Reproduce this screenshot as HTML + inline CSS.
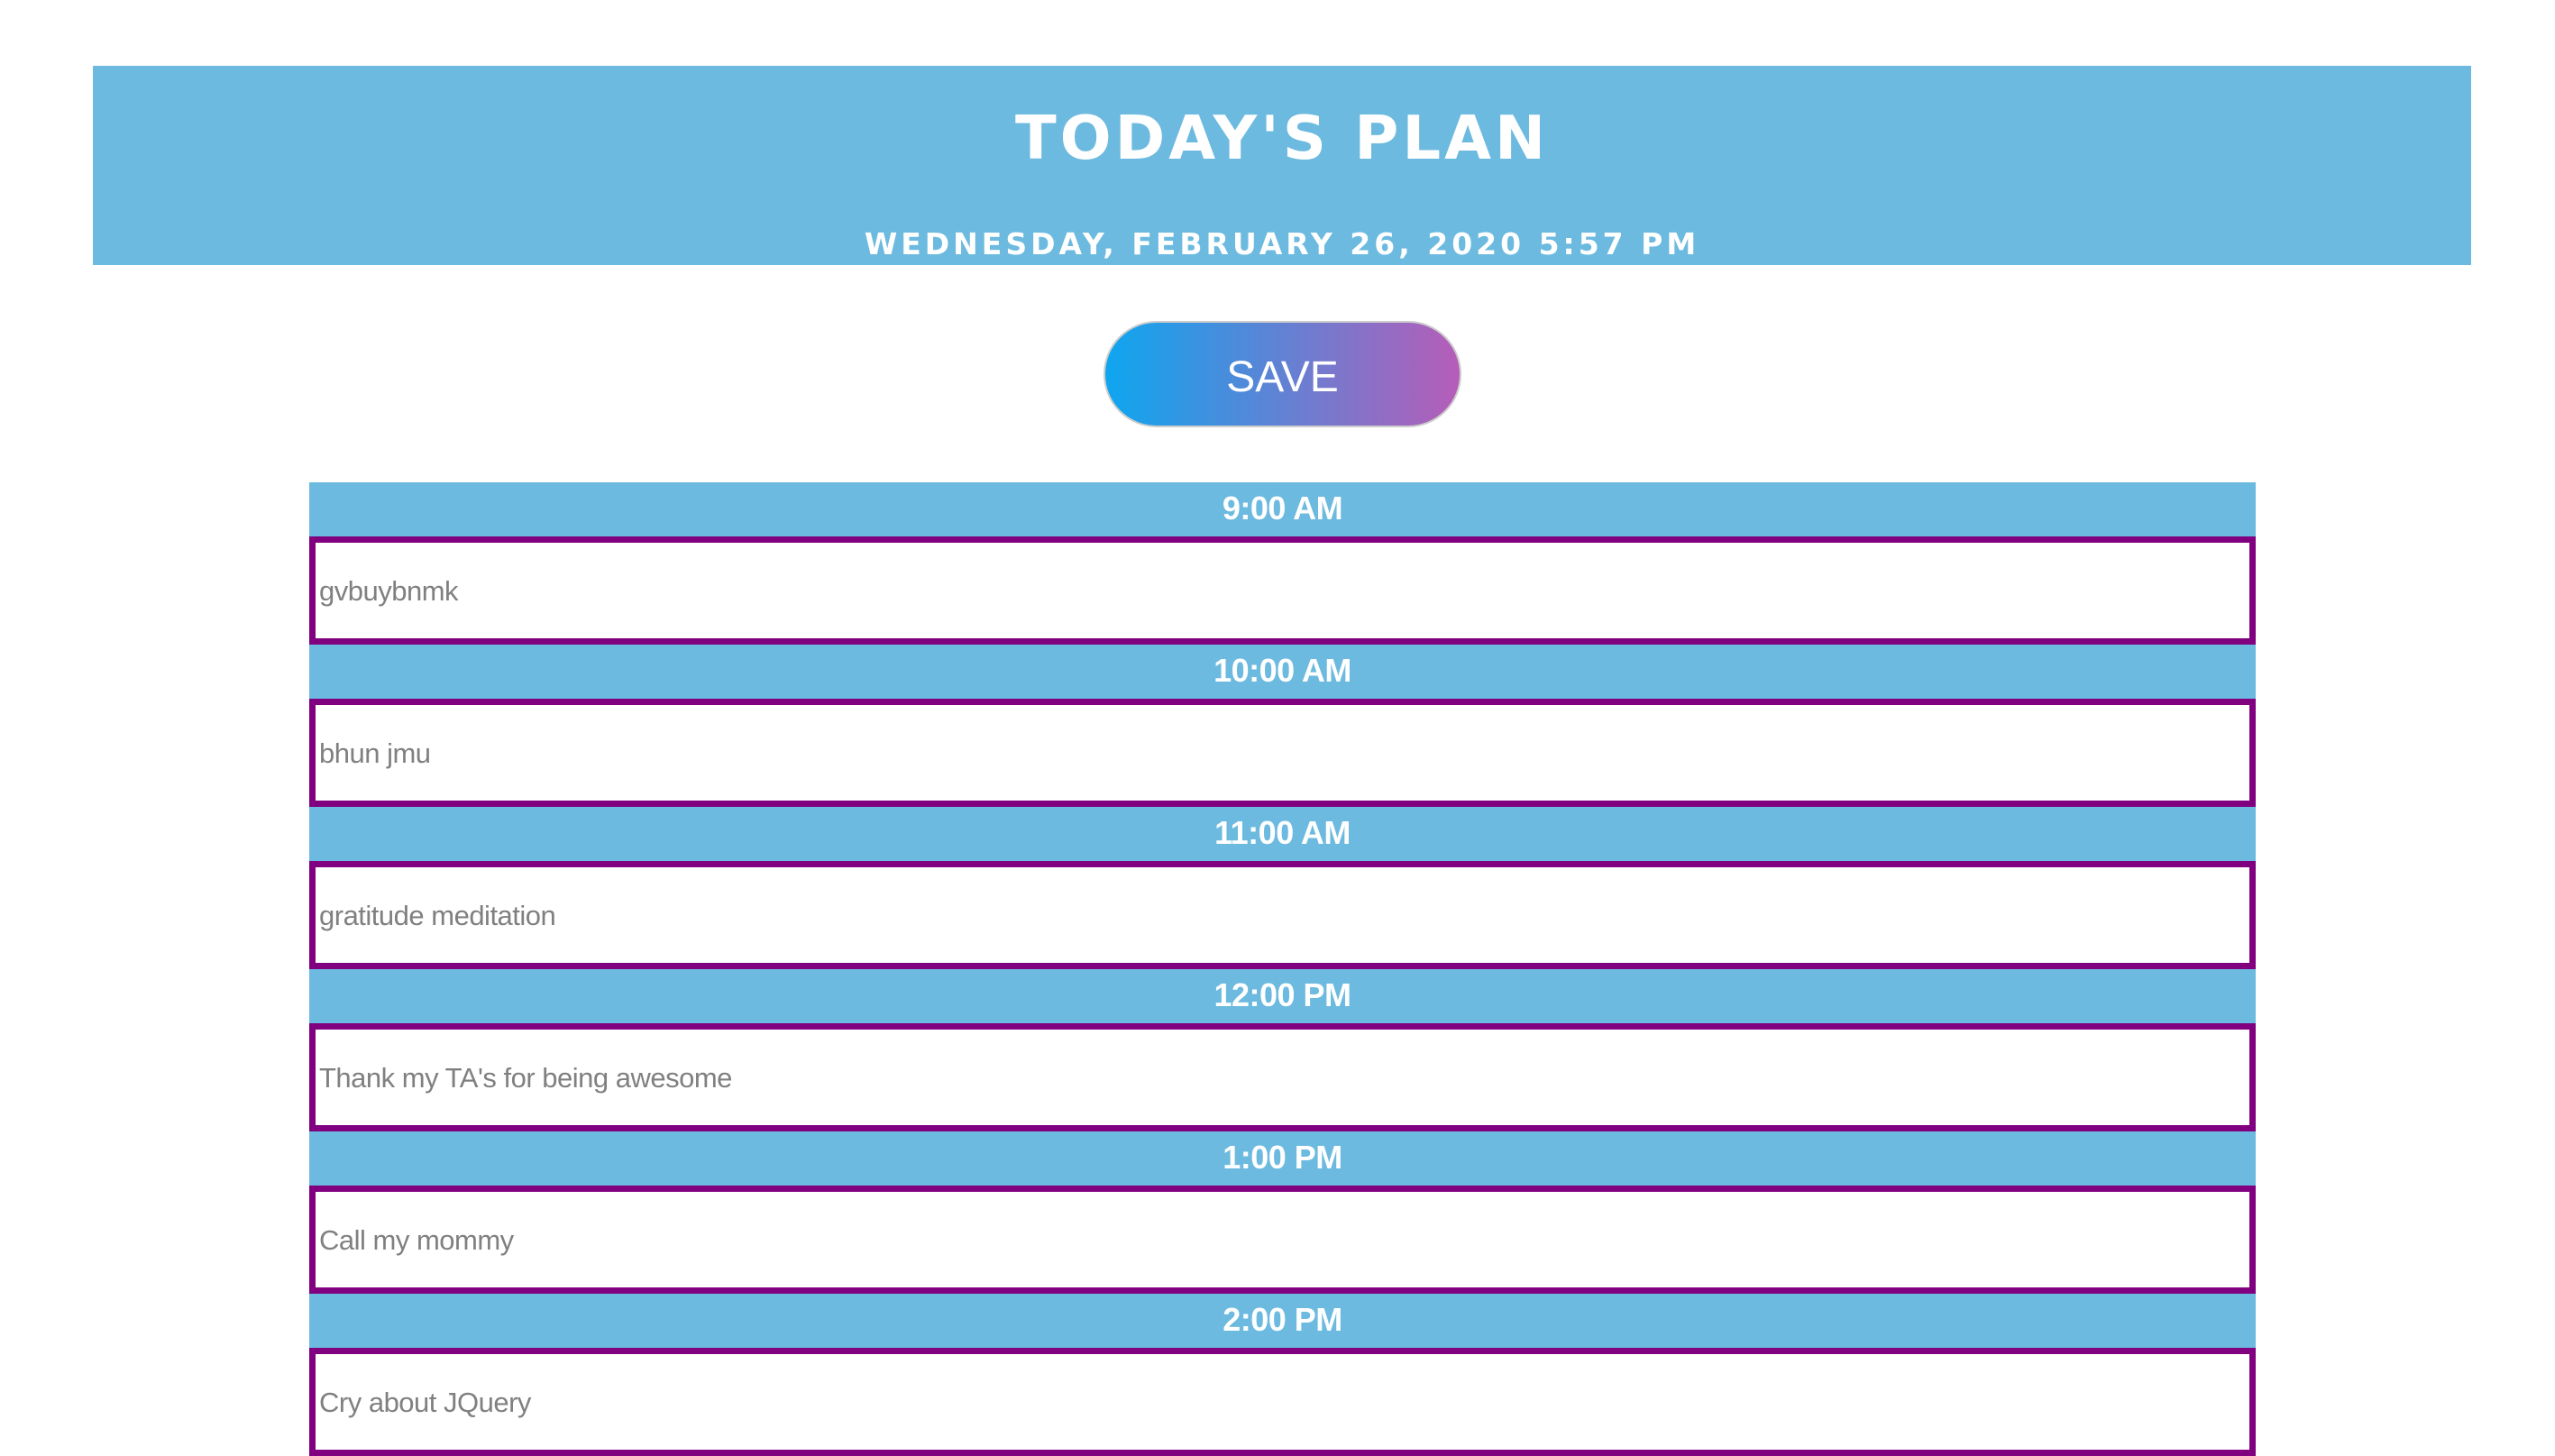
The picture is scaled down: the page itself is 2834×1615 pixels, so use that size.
<!DOCTYPE html>
<html><head><meta charset="utf-8"><style>
html,body{margin:0;padding:0;background:#fff;width:2834px;height:1614px;overflow:hidden}
.hdr{position:absolute;left:103px;top:73px;width:2638px;height:221px;background:#6cbadf;color:#fff;text-align:center;font-family:"DejaVu Sans",sans-serif;font-weight:bold}
.t{position:absolute;left:0;right:0;top:80px;font-size:67px;letter-spacing:4px;line-height:0;white-space:nowrap}
.d{position:absolute;left:0;right:0;top:198px;font-size:33px;letter-spacing:4px;line-height:0;white-space:nowrap}
.btn{position:absolute;left:1224px;top:356px;width:393px;height:114px;border:2px solid #ccc;border-radius:60px;background:linear-gradient(90deg,#0ea6ef,#b65db8);color:#fff;font-family:"Liberation Sans",sans-serif;font-size:48px;text-align:center;line-height:122px}
.tbl{position:absolute;left:343px;top:535px;width:2159px}
.bar{height:60px;background:#6cbadf;color:#fff;font-family:"Liberation Sans",sans-serif;font-weight:bold;font-size:36px;text-align:center;line-height:58px;letter-spacing:-0.5px}
.box{height:106px;border:7px solid #800080;background:#fff;color:#808080;font-family:"Liberation Sans",sans-serif;font-size:31px;line-height:108px;padding-left:4px;letter-spacing:-0.5px}
</style></head><body>
<div class="hdr"><div class="t">TODAY'S PLAN</div><div class="d">WEDNESDAY, FEBRUARY 26, 2020 5:57 PM</div></div>
<div class="btn">SAVE</div>
<div class="tbl">
<div class="bar">9:00 AM</div><div class="box">gvbuybnmk</div>
<div class="bar">10:00 AM</div><div class="box">bhun jmu</div>
<div class="bar">11:00 AM</div><div class="box">gratitude meditation</div>
<div class="bar">12:00 PM</div><div class="box">Thank my TA's for being awesome</div>
<div class="bar">1:00 PM</div><div class="box">Call my mommy</div>
<div class="bar">2:00 PM</div><div class="box">Cry about JQuery</div>
</div>
</body></html>
